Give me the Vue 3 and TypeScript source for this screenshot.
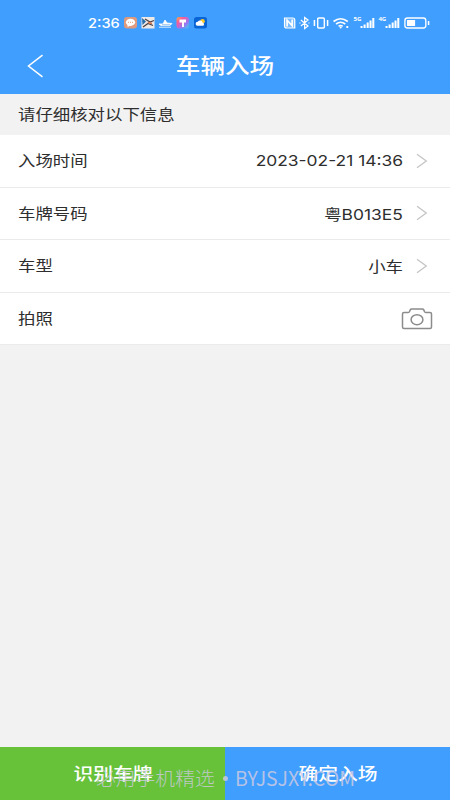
<script setup lang="ts">
interface InfoRow {
  label: string
  value: string
}

const rows: InfoRow[] = [
  { label: '入场时间', value: '2023-02-21 14:36' },
  { label: '车牌号码', value: '粤B013E5' },
  { label: '车型', value: '小车' },
]
</script>

<template>
  <main class="screen">
    <header class="top">
      <div class="status">
        <div class="status-left">
          <span class="clock">2:36</span>
          <svg class="apps" width="86" height="14" viewBox="0 0 86 14">
            <defs>
              <linearGradient id="rainbow" x1="0" y1="0" x2="1" y2="1">
                <stop offset="0" stop-color="#ffb12f" />
                <stop offset=".3" stop-color="#f65a9c" />
                <stop offset=".65" stop-color="#9b75f2" />
                <stop offset="1" stop-color="#35d2e8" />
              </linearGradient>
            </defs>
            <rect x="1" y="1" width="13" height="11.5" rx="3" fill="#df9a7d" />
            <ellipse cx="7.5" cy="6.3" rx="4.6" ry="3.6" fill="#fff" />
            <path d="M4.5 8v3l3-1.5" fill="#fff" />
            <path d="M5 6.3h1m1 0h1m1 0h1" stroke="#df9a7d" stroke-width="1" />
            <rect x="18.5" y="1" width="13" height="11.5" fill="#eee9e6" />
            <path d="M19 2l4 3.5L19.500 9z" fill="#286ca8" />
            <path d="M22 3l5 3 4-1.500M20 11l5-3.500 5 2" fill="none" stroke="#4b4145" stroke-width="1.300" />
            <path d="M25 6.500l4 1" stroke="#d8764f" stroke-width="1.600" />
            <path d="M36 8h4l2-4 2 3 5 .5-2 2H38zM36 11.200h12" fill="#fff" stroke="#fff" stroke-width=".8" />
            <path d="M39 8.800h8" stroke="#609ee3" stroke-width=".7" />
            <rect x="53.500" y="1" width="12.500" height="11.500" rx="2.800" fill="url(#rainbow)" />
            <path d="M56.500 3.500h6.500v3h-2V11h-2V6.500h-2.500z" fill="#fff" />
            <rect x="71" y="1" width="13" height="11.500" rx="2.500" fill="#0965d5" />
            <circle cx="79.500" cy="5.300" r="2.300" fill="#ffc928" />
            <path d="M74.500 9.800a2 2 0 0 1 .3-4 2.600 2.600 0 0 1 4.700.6 1.800 1.800 0 0 1 .5 3.400z" fill="#fff" />
          </svg>
        </div>
        <svg class="system" width="153" height="16" viewBox="0 0 150 16" preserveAspectRatio="none" fill="none" stroke="#fff">
          <path d="M2.500 3h8q2 0 2 2v8h-8q-2 0-2-2z" fill="#fff" fill-opacity=".3" stroke-width="1.200" />
          <path d="M5 11.500V5.200l5 5.600V4.500" stroke-width="1.700" />
          <path d="M18.500 5l7 6-3.300 2.500v-11L25.500 5l-7 6M17 8h1.200m7.600 0H27" stroke-width="1.200" />
          <rect x="35" y="3" width="6.500" height="10" rx="1" stroke-width="1.400" />
          <path d="M31.800 5v6M44.700 5v6" stroke-width="1.500" />
          <path d="M50.500 6.500q7-5.500 14 0M53 9q4.500-3.500 9 0M55.500 11.300q2-1.500 4 0" stroke-width="1.600" />
          <circle cx="57.500" cy="12.500" r="1" fill="#fff" stroke="none" />
          <path d="M64 11v2" stroke-width="1.800" />
          <g fill="#fff" stroke="none">
            <text x="70" y="6.500" class="network">5G</text>
            <text x="94.500" y="6.500" class="network">4G</text>
            <path d="M77 11h2v2h-2zM80 9.500h2V13h-2zM83 7.500h2V13h-2zM85.800 5.500h2V13h-2zM88.500 3h2v10h-2z" />
            <path d="M101.500 11h2v2h-2zM104.500 9.500h2V13h-2zM107.500 7.500h2V13h-2zM110.300 5.500h2V13h-2zM113 3h2v10h-2z" />
            <rect x="122.500" y="5" width="8" height="6" rx=".5" />
          </g>
          <rect x="120.500" y="3" width="20.500" height="10" rx="2.500" stroke-width="1.300" />
          <path d="M143.700 6v4" stroke-width="1.500" />
        </svg>
      </div>
      <nav class="nav">
        <svg class="back" width="18" height="24" viewBox="0 0 18 24">
          <path d="M15.500 1.200L1.500 12l14 10.800" fill="none" stroke="#fff" stroke-width="1.500" />
        </svg>
        <h1 class="title">车辆入场</h1>
      </nav>
    </header>

    <p class="hint"><span class="wide">请仔细核对以下信息</span></p>

    <section class="list">
      <div v-for="row in rows" :key="row.label" class="row">
        <span class="wide">{{ row.label }}</span>
        <span class="value">{{ row.value }}</span>
        <svg class="chevron" width="12" height="16" viewBox="0 0 12 16">
          <path d="M1 1.300L10.300 8 1 14.700" fill="none" stroke="#c5c5c5" stroke-width="1.300" />
        </svg>
      </div>
      <div class="row">
        <span class="wide">拍照</span>
        <svg class="camera" width="32" height="22" viewBox="0 0 32 22" fill="none" stroke="#8c8c8c" stroke-width="1.500">
          <path d="M3 4.500h4.200q1 0 1.400-1l.6-1.600q.4-.9 1.500-.9h10.600q1.100 0 1.500.9l.6 1.600q.4 1 1.400 1H29q1.500 0 1.500 1.500v13q0 1.500-1.500 1.500H3q-1.500 0-1.500-1.500V6q0-1.500 1.500-1.500z" />
          <ellipse cx="16" cy="11.700" rx="5.900" ry="5" />
        </svg>
      </div>
    </section>

    <footer class="actions">
      <button class="action scan" type="button"><span class="action-text">识别车牌</span></button>
      <button class="action confirm" type="button"><span class="action-text">确定入场</span></button>
      <div class="watermark"><span class="mark-cn">必用手机精选</span><i class="dot"></i><span class="mark-en">BYJSJXY.COM</span></div>
    </footer>
  </main>
</template>

<style>
body {
  margin: 0;
}
</style>

<style scoped>
.screen {
  display: flex;
  flex-direction: column;
  width: 450px;
  height: 800px;
  overflow: hidden;
  background: #f2f2f2;
  color: #2e2e2e;
  font-family: Roboto, "Noto Sans CJK SC", sans-serif;
  font-size: 15px;
}
.top {
  height: 94px;
  background: #409eff;
  color: #fff;
}
.status {
  display: flex;
  justify-content: space-between;
  align-items: center;
  height: 46px;
  padding: 0 15px 0 88px;
  box-sizing: border-box;
}
.status-left {
  display: flex;
  align-items: center;
}
.clock {
  width: 35px;
  font: 500 13.500px/18px Inter, sans-serif;
  transform: scaleX(1.08);
  transform-origin: left;
}
.network {
  font: 700 6px "Noto Sans", sans-serif;
}
.nav {
  display: grid;
  grid-template-columns: 54px 1fr 54px;
  align-items: center;
  height: 40px;
}
.back {
  margin-left: 27px;
}
.title {
  margin: 0;
  text-align: center;
  font-size: 21px;
  line-height: 40px;
  font-weight: 500;
  transform: scaleX(1.17);
}
.hint {
  display: flex;
  align-items: center;
  height: 41px;
  margin: 0;
  padding-left: 18px;
}
.wide {
  padding-bottom: 2px;
  transform: scaleX(1.16);
  transform-origin: left;
  white-space: nowrap;
}
.list {
  background: #fff;
}
.row {
  display: flex;
  align-items: center;
  height: 52.600px;
  box-sizing: border-box;
  padding: 0 17px 0 18px;
  border-bottom: 1px solid #ebebeb;
}
.value {
  margin-left: auto;
  font-family: Inter, "Noto Sans CJK SC", sans-serif;
  font-size: 15px;
  transform: scaleX(1.16);
  transform-origin: right;
  white-space: nowrap;
}
.chevron {
  margin: 0 5px 0 13px;
}
.camera {
  margin-left: auto;
}
.actions {
  position: relative;
  display: flex;
  height: 53px;
  margin-top: auto;
}
.action {
  flex: 1;
  border: 0;
  padding: 0 0 2px;
  color: #fff;
  font: 500 17px/51px "Noto Sans CJK SC", sans-serif;
}
.scan {
  background: #67c23a;
}
.confirm {
  background: #409eff;
}
.action-text {
  display: inline-block;
  transform: scaleX(1.16);
}
.watermark {
  position: absolute;
  top: 17px;
  left: 96px;
  display: flex;
  align-items: center;
  height: 28px;
  color: rgba(208, 203, 225, .82);
  font: 300 19.800px/28px "Noto Sans CJK SC", sans-serif;
  white-space: nowrap;
  pointer-events: none;
}
.mark-cn {
  width: 119px;
}
.dot {
  width: 5px;
  height: 5px;
  margin: 0 7px 0 8px;
  border-radius: 50%;
  background: currentColor;
}
.mark-en {
  font-weight: 400;
  font-size: 19.500px;
}
</style>
